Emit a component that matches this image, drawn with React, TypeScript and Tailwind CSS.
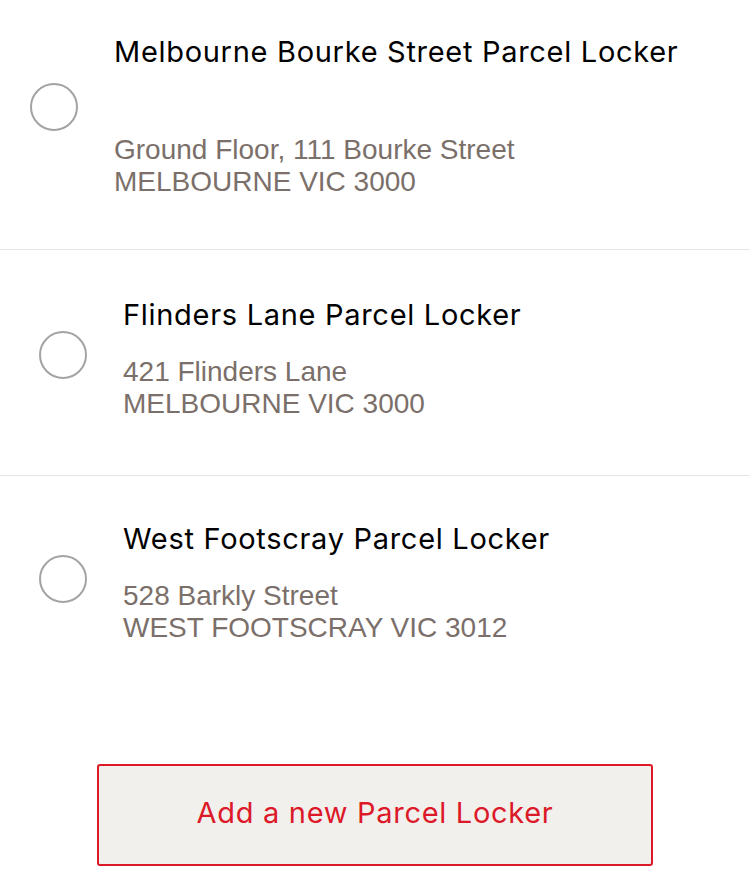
import React from "react";

type Locker = {
  id: string;
  name: string;
  line1: string;
  line2: string;
};

const LOCKERS: Locker[] = [
  { id: "bourke", name: "Melbourne Bourke Street Parcel Locker", line1: "Ground Floor, 111 Bourke Street", line2: "MELBOURNE VIC 3000" },
  { id: "flinders", name: "Flinders Lane Parcel Locker", line1: "421 Flinders Lane", line2: "MELBOURNE VIC 3000" },
  { id: "footscray", name: "West Footscray Parcel Locker", line1: "528 Barkly Street", line2: "WEST FOOTSCRAY VIC 3012" },
];

function Radio({ className }: { className?: string }) {
  return <span className={"block w-[48px] h-[48px] shrink-0 rounded-full border-2 border-[#a3a3a3] bg-white " + (className ?? "")} />;
}

export default function App() {
  const [first, ...rest] = LOCKERS;

  return (
    <div className="w-[750px] h-[869px] bg-white overflow-hidden">
      {/* first row has the taller title block */}
      <div className="flex gap-[36px] pl-[30px] pt-[34px] pb-[51px] border-b border-[#e6e6e6]">
        <Radio className="mt-[49px]" />
        <div>
          <p className="text-[29px] leading-[36px] text-black font-['Inter',sans-serif] tracking-[0.7px] whitespace-nowrap">{first.name}</p>
          <div className="mt-[64px] text-[28px] leading-[32px] text-[#7b6f6a] font-['Liberation_Sans',Arial,sans-serif]">
            <p>{first.line1}</p>
            <p>{first.line2}</p>
          </div>
        </div>
      </div>

      {rest.map((l, i) => (
        <div key={l.id} className={"flex gap-[36px] pl-[39px] " + (i === 0 ? "pt-[47px] pb-[55px] border-b border-[#e6e6e6]" : "pt-[45px]")}>
          <Radio className="mt-[34px]" />
          <div>
            <p className="text-[29px] leading-[36px] text-black font-['Inter',sans-serif] tracking-[0.7px] whitespace-nowrap">{l.name}</p>
            <div className="mt-[23px] text-[28px] leading-[32px] text-[#7b6f6a] font-['Liberation_Sans',Arial,sans-serif]">
              <p>{l.line1}</p>
              <p>{l.line2}</p>
            </div>
          </div>
        </div>
      ))}

      <div className="flex justify-center mt-[120px]">
        <button className="w-[556px] h-[102px] pb-[5px] rounded-[3px] border-2 border-[#dc1928] bg-[#f1f0ed] text-[#dc1928] text-[29px] tracking-[0.7px] font-['Inter',sans-serif]">
          Add a new Parcel Locker
        </button>
      </div>
    </div>
  );
}
